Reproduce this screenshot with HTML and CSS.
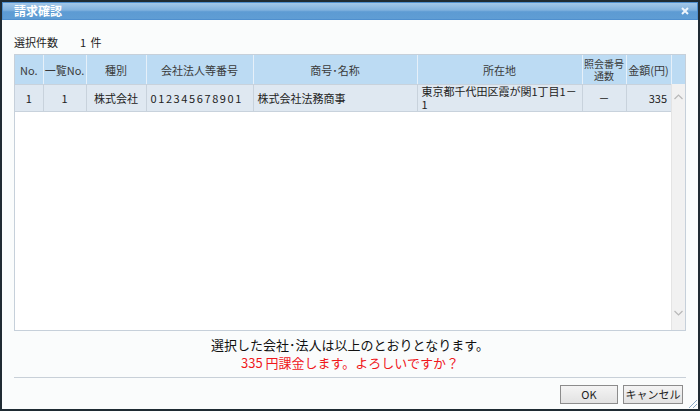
FILE: index.html
```html
<!DOCTYPE html>
<html lang="ja">

<head>
    <meta charset="UTF-8">
    <meta name="viewport" content="width=device-width, initial-scale=1.0">
    <title>請求確認</title>
    <link rel="stylesheet" href="styles.css">
</head>

<body>
    <div class="dialog">
        <div class="titlebar">
            <span class="title">請求確認</span>
            <svg class="close" width="8" height="8" viewBox="0 0 8 8">
                <path d="M1 1L7 7M7 1L1 7" stroke="#eef5fc" stroke-width="2" />
            </svg>
        </div>

        <div class="content">
            <div class="summary">
                <span class="summary-label">選択件数</span>
                <span class="summary-value">1 件</span>
            </div>

            <div class="grid">
                <table class="grid-head">
                    <colgroup>
                        <col class="c-no">
                        <col class="c-listno">
                        <col class="c-type">
                        <col class="c-corp">
                        <col class="c-name">
                        <col class="c-addr">
                        <col class="c-count">
                        <col class="c-fee">
                        <col class="c-spacer">
                    </colgroup>
                    <tr>
                        <th>No.</th>
                        <th>一覧No.</th>
                        <th>種別</th>
                        <th>会社法人等番号</th>
                        <th>商号･名称</th>
                        <th>所在地</th>
                        <th class="two-line">照会番号通数</th>
                        <th>金額(円)</th>
                        <th class="spacer"></th>
                    </tr>
                </table>

                <div class="grid-body">
                    <div class="rows">
                        <table class="grid-rows">
                            <colgroup>
                                <col class="c-no">
                                <col class="c-listno">
                                <col class="c-type">
                                <col class="c-corp">
                                <col class="c-name">
                                <col class="c-addr">
                                <col class="c-count">
                                <col class="c-fee">
                            </colgroup>
                            <tr>
                                <td class="center">1</td>
                                <td class="center">1</td>
                                <td class="center">株式会社</td>
                                <td class="digits">012345678901</td>
                                <td>株式会社法務商事</td>
                                <td class="addr">東京都千代田区霞が関1丁目1－1</td>
                                <td class="center">－</td>
                                <td class="right">335</td>
                            </tr>
                        </table>
                    </div>
                    <div class="scrollbar">
                        <svg class="arrow" width="9" height="6" viewBox="0 0 9 6">
                            <polyline points="0.5,5 4.5,1 8.5,5" fill="none" stroke="#b8b8b8" stroke-width="1.2" />
                        </svg>
                        <svg class="arrow down" width="9" height="6" viewBox="0 0 9 6">
                            <polyline points="0.5,1 4.5,5 8.5,1" fill="none" stroke="#b8b8b8" stroke-width="1.2" />
                        </svg>
                    </div>
                </div>
            </div>

            <div class="message">
                <p class="msg-main">選択した会社･法人は以上のとおりとなります。</p>
                <p class="msg-fee">335 円課金します。よろしいですか？</p>
            </div>

            <div class="buttons">
                <button type="button" class="btn">OK</button>
                <button type="button" class="btn">キャンセル</button>
            </div>
        </div>
        <div class="grip"></div>
    </div>
</body>

</html>
```

FILE: styles.css
```css
body {
    margin: 0;
    background-color: #1f2b33;
    font-family: "Noto Sans CJK JP", "DejaVu Sans", sans-serif;
    color: #222;
}

.dialog {
    position: relative;
    margin: 2px;
    height: 407px;
    background-color: #fafcfc;
    display: flex;
    flex-direction: column;
}

.titlebar {
    height: 16px;
    border: 1px solid #4f8fce;
    background: linear-gradient(to bottom, #a3c7e8 0%, #7fb1de 45%, #5d9bd3 55%, #5f9dd4 100%);
    display: flex;
    align-items: center;
    justify-content: space-between;
    padding: 0 8px 0 11px;
}

.title {
    color: #fff;
    font-size: 12px;
    font-weight: bold;
    line-height: 16px;
}

.content {
    flex: 1;
    display: flex;
    flex-direction: column;
    padding: 0 12px;
}

.summary {
    margin-top: 14px;
    height: 16px;
    font-size: 11px;
    line-height: 16px;
    display: flex;
}

.summary-label {
    width: 66px;
}

.summary-value {
    letter-spacing: 1px;
}

.grid {
    margin-top: 4px;
    height: 275px;
    border: 1px solid #c6d0da;
    background-color: #fff;
    display: flex;
    flex-direction: column;
}

table {
    border-collapse: collapse;
    table-layout: fixed;
    width: 100%;
    font-size: 11px;
}

.c-no { width: 28px; }
.c-listno { width: 43px; }
.c-type { width: 60px; }
.c-corp { width: 107px; }
.c-name { width: 164px; }
.c-addr { width: 165px; }
.c-count { width: 44px; }
.c-fee { width: 45px; }
.c-spacer { width: 14px; }

.grid-head th {
    height: 29px;
    padding: 0;
    background-color: #bcdbf3;
    border-right: 1px solid #e6f0f9;
    font-weight: normal;
    color: #3a3a3a;
    text-align: center;
    line-height: 12px;
    white-space: nowrap;
    overflow: hidden;
}

.grid-head th.spacer {
    border-right: none;
}

.grid-head th.two-line {
    font-size: 10px;
    line-height: 12px;
    white-space: normal;
    word-break: break-all;
}

.grid-body {
    flex: 1;
    display: flex;
}

.rows {
    flex: 1;
}

.grid-rows td {
    height: 26px;
    padding: 0 4px;
    background-color: #dfe8f1;
    border-right: 1px solid #c8d2dc;
    border-top: 1px solid #c8d2dc;
    border-bottom: 1px solid #c8d2dc;
    color: #222;
    line-height: 13px;
    white-space: nowrap;
}

.grid-rows td:last-child {
    border-right: none;
}

.grid-rows td.addr {
    white-space: normal;
    word-break: break-all;
    vertical-align: middle;
}

.center {
    text-align: center;
}

.right {
    text-align: right;
}

.digits {
    letter-spacing: 1.6px;
}

.scrollbar {
    width: 14px;
    background-color: #f1f1f1;
    border-left: 1px solid #e4e4e4;
    display: flex;
    flex-direction: column;
    justify-content: space-between;
    align-items: center;
}

.arrow {
    margin-top: 10px;
}

.arrow.down {
    margin-top: 0;
    margin-bottom: 14px;
}

.message {
    text-align: center;
    padding-top: 5px;
    padding-bottom: 5px;
    border-bottom: 1px solid #c8d0d8;
}

.message p {
    margin: 0;
    line-height: 18px;
}

.msg-main {
    font-size: 13px;
    color: #111;
}

.msg-fee {
    font-size: 13px;
    color: #f0181c;
}

.buttons {
    display: flex;
    justify-content: flex-end;
    gap: 5px;
    padding: 7px 3px 0 0;
}

.btn {
    height: 19px;
    padding: 0;
    font-family: "Noto Sans CJK JP", "DejaVu Sans", sans-serif;
    font-size: 11px;
    line-height: 15px;
    color: #222;
    background: linear-gradient(to bottom, #f4f4f4, #e2e2e2);
    border: 1px solid #8c8c8c;
    border-radius: 0;
}

.btn:first-child {
    width: 58px;
}

.btn:last-child {
    width: 60px;
}

/* リサイズ用のつまみ */
.grip {
    position: absolute;
    right: 1px;
    bottom: 1px;
    width: 10px;
    height: 10px;
    background: repeating-linear-gradient(135deg, transparent 0 2px, #8aa9c6 2px 3px);
    clip-path: polygon(100% 0, 100% 100%, 0 100%);
}
```
